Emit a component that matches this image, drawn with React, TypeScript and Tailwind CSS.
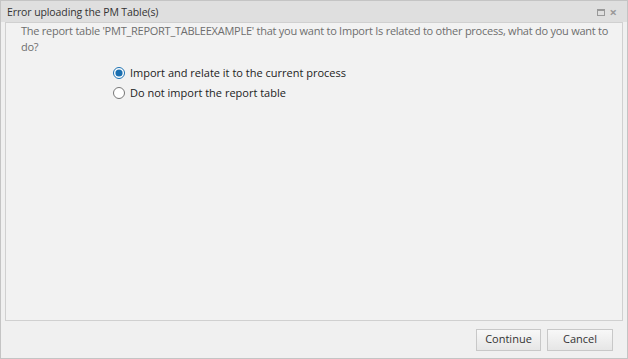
export default function App() {
  return (
    <div className="w-[628px] h-[359px] bg-[#f0f0f0] border border-[#c4c4c4] flex flex-col text-[11px]" style={{ fontFamily: '"Open Sans", sans-serif' }}>
      <div className="h-[21px] bg-[#dfdfdf] flex items-center justify-between pl-[6px] pr-[10px] shrink-0">
        <span className="text-[10.5px] tracking-[-0.1px] text-[#333] pt-[2px]">Error uploading the PM Table(s)</span>
        <div className="flex items-center gap-[5px] text-[#999] pt-[2px]">
          <div className="w-[8px] h-[7px] border border-[#999] border-t-2" />
          <span className="text-[13px] leading-none font-bold">×</span>
        </div>
      </div>
      <div className="flex-1 flex flex-col px-[4px]">
        <div className="flex-1 bg-[#f2f2f2] border border-[#d0d0d0] pl-[15px] pr-[10px]">
          <p className="text-[#6e6e6e] leading-[16px] tracking-[-0.25px]">
            The report table 'PMT_REPORT_TABLEEXAMPLE' that you want to Import Is related to other process, what do you want to do?
          </p>
          <div className="mt-[10px] ml-[92px] flex flex-col gap-[4px] text-[#222] text-[11px]">
            <label className="flex items-center gap-[5px] h-[16px]">
              <input type="radio" name="opt" defaultChecked className="w-[12px] h-[12px] m-0 accent-[#1a6fb0]" />
              Import and relate it to the current process
            </label>
            <label className="flex items-center gap-[5px] h-[16px]">
              <input type="radio" name="opt" className="w-[12px] h-[12px] m-0" />
              Do not import the report table
            </label>
          </div>
        </div>
        <div className="h-[37px] flex items-center justify-end gap-[6px] pr-[10px] shrink-0">
          <button className="w-[65px] h-[22px] border border-[#c8c8c8] bg-gradient-to-b from-[#f8f8f8] to-[#e6e6e6] text-[#333] text-[11px]">Continue</button>
          <button className="w-[66px] h-[22px] border border-[#c8c8c8] bg-gradient-to-b from-[#f8f8f8] to-[#e6e6e6] text-[#333] text-[11px]">Cancel</button>
        </div>
      </div>
    </div>
  );
}
